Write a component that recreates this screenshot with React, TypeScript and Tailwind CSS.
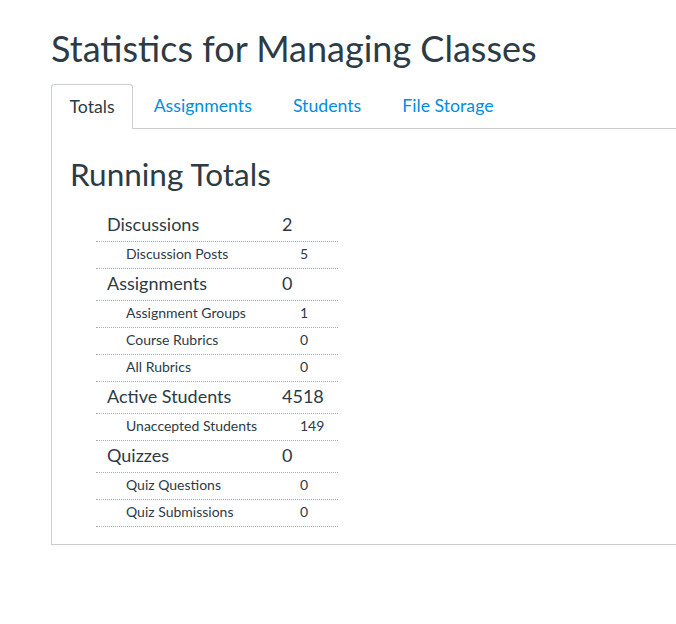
import React from 'react';

type Row = { label: string; value: number; major?: boolean };

const rows: Row[] = [
  { label: 'Discussions', value: 2, major: true },
  { label: 'Discussion Posts', value: 5 },
  { label: 'Assignments', value: 0, major: true },
  { label: 'Assignment Groups', value: 1 },
  { label: 'Course Rubrics', value: 0 },
  { label: 'All Rubrics', value: 0 },
  { label: 'Active Students', value: 4518, major: true },
  { label: 'Unaccepted Students', value: 149 },
  { label: 'Quizzes', value: 0, major: true },
  { label: 'Quiz Questions', value: 0 },
  { label: 'Quiz Submissions', value: 0 },
];

const tabs = ['Totals', 'Assignments', 'Students', 'File Storage'];

const App: React.FC = () => {
  return (
    <div
      className="w-screen min-h-screen overflow-hidden bg-white text-[#2d3b45]"
      style={{ fontFamily: 'Lato, "Open Sans", sans-serif' }}
    >
      <div className="pl-[51px] pt-[26px] w-[720px]">
        <h1 className="text-[36px] leading-[45px] font-normal">Statistics for Managing Classes</h1>

        <div className="mt-[13px] flex items-end border-b border-[#c7cdd1]">
          {tabs.map((tab, i) =>
            i === 0 ? (
              <div
                key={tab}
                className="-mb-px px-[17.5px] h-[45px] flex items-center text-[17.7px] border border-b-0 border-[#c7cdd1] rounded-t-[4px] bg-white"
              >
                {tab}
              </div>
            ) : (
              <a
                key={tab}
                href="#"
                className="px-[20.5px] h-[44px] flex items-center text-[17.7px] text-[#008ee2]"
              >
                {tab}
              </a>
            )
          )}
        </div>

        <div className="border-x border-b border-[#c7cdd1] pl-[18px] pt-[27px] pb-[17px]">
          <h2 className="text-[31.5px] leading-[36px] font-normal">Running Totals</h2>
          <div className="mt-[18px] ml-[26px] w-[242px]">
            {rows.map((row) =>
              row.major ? (
                <div
                  key={row.label}
                  className="flex items-center h-[32px] pl-[11px] pb-[3px] text-[18px] border-b border-dotted border-[#a5afb5]"
                >
                  <span className="w-[175px]">{row.label}</span>
                  <span>{row.value}</span>
                </div>
              ) : (
                <div
                  key={row.label}
                  className="flex items-center h-[27px] pl-[30px] pb-[3px] text-[14px] border-b border-dotted border-[#a5afb5]"
                >
                  <span className="w-[174px]">{row.label}</span>
                  <span>{row.value}</span>
                </div>
              )
            )}
          </div>
        </div>
      </div>
    </div>
  );
};

export default App;
